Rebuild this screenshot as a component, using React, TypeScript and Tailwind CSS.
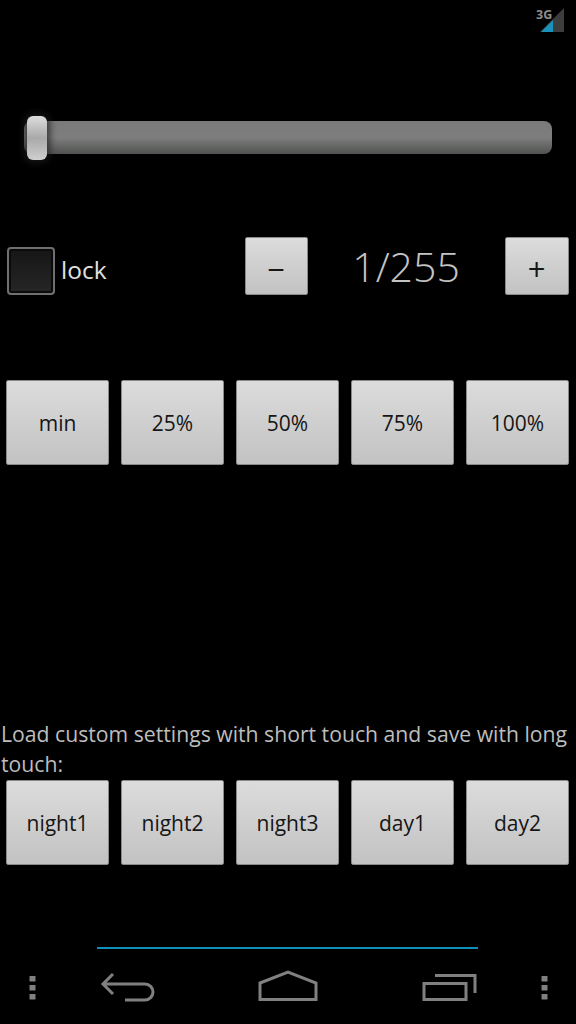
const font = "font-['Open_Sans','Noto_Sans',sans-serif]";

const btn =
  "flex items-center justify-center rounded-[2px] border border-[#8a8a8a] bg-gradient-to-b from-[#dcdcdc] to-[#c2c2c2] text-[#161616]";

function PresetRow({ labels }: { labels: string[] }) {
  return (
    <div className="flex gap-[12px] pl-[6px] pr-[7px]">
      {labels.map((label) => (
        <button key={label} className={`${btn} h-[85px] flex-1 pt-[2px] text-[21px]`}>
          {label}
        </button>
      ))}
    </div>
  );
}

function Dots() {
  return (
    <svg width="8" height="24" viewBox="0 0 8 24" fill="#808080">
      <rect x="0.5" y="0" width="6" height="5.5" rx="0.5" />
      <rect x="0.5" y="9" width="6" height="5.5" rx="0.5" />
      <rect x="0.5" y="18" width="6" height="5.5" rx="0.5" />
    </svg>
  );
}

export default function App() {
  return (
    <div className={`${font} flex h-[1024px] w-[576px] flex-col overflow-hidden bg-black`}>
      {/* status bar */}
      <div className="flex h-[36px] justify-end pr-[11px] pt-[8px]">
        <div className="relative h-[24px] w-[30px]">
          <svg className="absolute left-[5px] top-0" width="25" height="24" viewBox="0 0 25 24">
            <path d="M24 0V24H0Z" fill="#3d3d3d" />
            <path d="M13 12V24H1Z" fill="#1993bd" />
          </svg>
          <span className="absolute left-[1px] top-0 text-[12.5px] font-bold leading-[13px] text-[#8c8c8c]">3G</span>
        </div>
      </div>

      {/* slider */}
      <div className="relative mt-[84.5px] ml-[24px] h-[33px] w-[528px] rounded-[8px] bg-gradient-to-b from-[#7a7a7a] via-[#7e7e7e] to-[#505250]">
        <div className="absolute left-[3px] top-[-4.5px] h-[44px] w-[20px] rounded-[6px] bg-gradient-to-b from-[#dedede] via-[#a9a9a9] to-[#cfcfcf] shadow-[0_0_7px_3px_rgba(30,30,30,0.75)]" />
      </div>

      {/* lock row */}
      <div className="mt-[83.5px] flex h-[58px] items-start">
        <div className="ml-[7px] mt-[10px] h-[48px] w-[48px] rounded-[4px] border-2 border-[#6f6f6f] bg-gradient-to-b from-[#161616] to-[#262626] shadow-[inset_0_0_0_2px_#0a0a0a]" />
        <span className="ml-[6px] mt-[15px] text-[24.5px] leading-[36px] text-[#e0e0e0]">lock</span>
        <button className={`${btn} ml-[138px] h-[58px] w-[63px] pt-[6px] text-[31px]`}>−</button>
        <span className="w-[197px] text-center text-[41px] font-light leading-[58px] text-[#c4c4c4]">1/255</span>
        <button className={`${btn} h-[58px] w-[64px] pt-[6px] text-[31px]`}>+</button>
      </div>

      {/* percent presets */}
      <div className="mt-[85px]">
        <PresetRow labels={["min", "25%", "50%", "75%", "100%"]} />
      </div>

      {/* custom settings */}
      <p className="mt-[254px] pl-[1px] text-[21.2px] leading-[30px] text-[#bdbdbd]">
        Load custom settings with short touch and save with long touch:
      </p>
      <div className="mt-[1px]">
        <PresetRow labels={["night1", "night2", "night3", "day1", "day2"]} />
      </div>

      {/* nav bar */}
      <div className="ml-[97px] mt-[82px] h-[2px] w-[381px] bg-[#0f8fb8]" />
      <div className="flex flex-1 items-start pl-[29px] pt-[23px]">
        <div className="mt-[4px]">
          <Dots />
        </div>
        <svg className="ml-[62px]" width="56" height="30" viewBox="0 0 56 30" fill="none" stroke="#808080" strokeWidth="3">
          <path d="M14 2L4 12L14 22M4 12H46A8 8 0 0 1 46 28H26" />
        </svg>
        <svg className="ml-[103px] mt-[-2px]" width="60" height="32" viewBox="0 0 60 32" fill="none" stroke="#808080" strokeWidth="3">
          <path d="M2 13L30 2L58 13V29.5H2Z" />
        </svg>
        <svg className="ml-[104px]" width="56" height="30" viewBox="0 0 56 30" fill="none" stroke="#808080" strokeWidth="3">
          <rect x="2" y="11.5" width="42" height="16" />
          <path d="M13 3.5H53V21" />
        </svg>
        <div className="ml-[63px] mt-[4px]">
          <Dots />
        </div>
      </div>
    </div>
  );
}
